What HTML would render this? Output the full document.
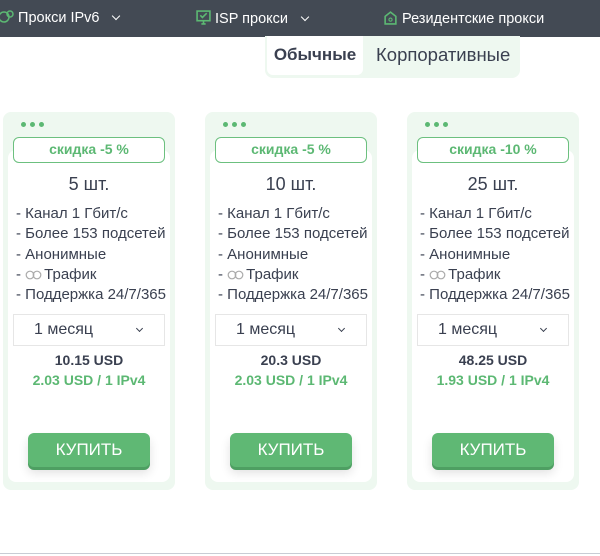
<!DOCTYPE html>
<html><head><meta charset="utf-8"><style>
*{box-sizing:border-box;margin:0;padding:0}
body{width:600px;height:556px;background:#fff;font-family:"Liberation Sans",sans-serif;color:#3a4050;position:relative;overflow:hidden}
.hdr{position:absolute;left:0;top:0;width:600px;height:37px;background:#434a54;color:#fff;font-size:14.5px}
.hdr span{position:absolute;top:10px;white-space:nowrap}
.chev{display:inline-block;width:6px;height:6px;border-right:1.5px solid #fff;border-bottom:1.5px solid #fff;transform:rotate(45deg);margin-left:14px;position:relative;top:-3px}
.tabs{position:absolute;left:265px;top:36px;width:255px;height:42px;background:#eef8f0;border-radius:0 0 8px 8px}
.tabs .a{position:absolute;left:2px;top:0;width:96px;height:39px;background:#fff;border-radius:0 0 6px 6px;font-weight:bold;font-size:17px;text-align:center;line-height:38px;color:#3a4050}
.tabs .b{position:absolute;left:111px;top:0;line-height:38px;font-size:18.5px;color:#3a4050}
.card{position:absolute;top:112px;width:172px;height:378px;background:#eef8f0;border-radius:8px}
.in{position:absolute;left:5px;top:38px;width:162px;height:332px;background:#fff;border-radius:8px}
.dots{position:absolute;left:18px;top:10px;line-height:5px;height:5px}
.dots i{display:inline-block;vertical-align:top;width:5px;height:5px;border-radius:50%;background:#5cb873;margin-right:4px}
.disc{position:absolute;left:10px;top:25px;width:152px;height:26px;border:1.5px solid #6cc07f;border-radius:6px;background:#fff;color:#5cb873;font-weight:bold;font-size:14px;text-align:center;line-height:23px}
.qty{position:absolute;left:0;width:172px;top:62px;text-align:center;font-size:18px}
.feat{position:absolute;left:13px;top:92px;font-size:15px;line-height:20.3px;white-space:nowrap}
.sel{position:absolute;left:10px;top:202px;width:152px;height:32px;border:1px solid #e6e6e6;font-size:16px;line-height:30px;padding-left:20px}
.sel .chev{border-color:#3a4050;position:absolute;right:22px;top:11px;margin:0;width:5px;height:5px}
.p1{position:absolute;left:0;width:172px;top:240px;text-align:center;font-weight:bold;font-size:14px}
.p2{position:absolute;left:0;width:172px;top:260px;text-align:center;font-weight:bold;font-size:14px;color:#5cb873}
.buy{position:absolute;left:25px;top:321px;width:122px;height:34px;background:#5fb874;border-radius:6px;color:#fff;font-size:17px;text-align:center;line-height:33px;box-shadow:0 3px 0 #4e9f62,0 6px 10px rgba(0,0,0,.12)}
.inf{display:inline-block;vertical-align:-1px;margin-right:2px}
.line{position:absolute;left:0;top:553px;width:600px;height:1px;background:#c8ccd4}
</style></head><body>
<div class="hdr">
<span style="left:-2px"><svg width="16" height="14" viewBox="0 0 16 14" style="vertical-align:-2px"><circle cx="6" cy="7" r="5" fill="none" stroke="#5cb873" stroke-width="1.5"/><circle cx="12" cy="4" r="3" fill="none" stroke="#5cb873" stroke-width="1.5"/></svg> Прокси IPv6<i class="chev"></i></span>
<span style="left:196px"><svg width="15" height="15" viewBox="0 0 14 14" style="vertical-align:-2px"><rect x="1" y="1" width="12" height="9" fill="none" stroke="#5cb873" stroke-width="1.5"/><path d="M5 13h4M7 10v3" stroke="#5cb873" stroke-width="1.5"/><path d="M4 5l2 2 4-4" stroke="#5cb873" stroke-width="1.5" fill="none"/></svg> ISP прокси<i class="chev"></i></span>
<span style="left:383px"><svg width="15" height="15" viewBox="0 0 14 14" style="vertical-align:-2px"><path d="M2 6l5-4 5 4v7H2z" fill="none" stroke="#5cb873" stroke-width="1.5"/><circle cx="7" cy="9" r="1.5" fill="none" stroke="#5cb873"/></svg> Резидентские прокси</span>
</div>
<div class="tabs"><div class="a">Обычные</div><div class="b">Корпоративные</div></div>

<div class="card" style="left:3px"><div class="in"></div><div class="dots"><i></i><i></i><i></i></div><div class="disc">скидка -5 %</div><div class="qty">5 шт.</div>
<div class="feat">- Канал 1 Гбит/с<br>- Более 153 подсетей<br>- Анонимные<br>- <svg class="inf" width="17" height="10" viewBox="0 0 17 10"><circle cx="5" cy="5" r="3.8" fill="none" stroke="#aaa" stroke-width="1.2"/><circle cx="12" cy="5" r="3.8" fill="none" stroke="#aaa" stroke-width="1.2"/></svg>Трафик<br>- Поддержка 24/7/365</div>
<div class="sel">1 месяц<i class="chev"></i></div><div class="p1">10.15 USD</div><div class="p2">2.03 USD / 1 IPv4</div><div class="buy">КУПИТЬ</div></div>

<div class="card" style="left:205px"><div class="in"></div><div class="dots"><i></i><i></i><i></i></div><div class="disc">скидка -5 %</div><div class="qty">10 шт.</div>
<div class="feat">- Канал 1 Гбит/с<br>- Более 153 подсетей<br>- Анонимные<br>- <svg class="inf" width="17" height="10" viewBox="0 0 17 10"><circle cx="5" cy="5" r="3.8" fill="none" stroke="#aaa" stroke-width="1.2"/><circle cx="12" cy="5" r="3.8" fill="none" stroke="#aaa" stroke-width="1.2"/></svg>Трафик<br>- Поддержка 24/7/365</div>
<div class="sel">1 месяц<i class="chev"></i></div><div class="p1">20.3 USD</div><div class="p2">2.03 USD / 1 IPv4</div><div class="buy">КУПИТЬ</div></div>

<div class="card" style="left:407px"><div class="in"></div><div class="dots"><i></i><i></i><i></i></div><div class="disc">скидка -10 %</div><div class="qty">25 шт.</div>
<div class="feat">- Канал 1 Гбит/с<br>- Более 153 подсетей<br>- Анонимные<br>- <svg class="inf" width="17" height="10" viewBox="0 0 17 10"><circle cx="5" cy="5" r="3.8" fill="none" stroke="#aaa" stroke-width="1.2"/><circle cx="12" cy="5" r="3.8" fill="none" stroke="#aaa" stroke-width="1.2"/></svg>Трафик<br>- Поддержка 24/7/365</div>
<div class="sel">1 месяц<i class="chev"></i></div><div class="p1">48.25 USD</div><div class="p2">1.93 USD / 1 IPv4</div><div class="buy">КУПИТЬ</div></div>
<div class="line"></div>
</body></html>
